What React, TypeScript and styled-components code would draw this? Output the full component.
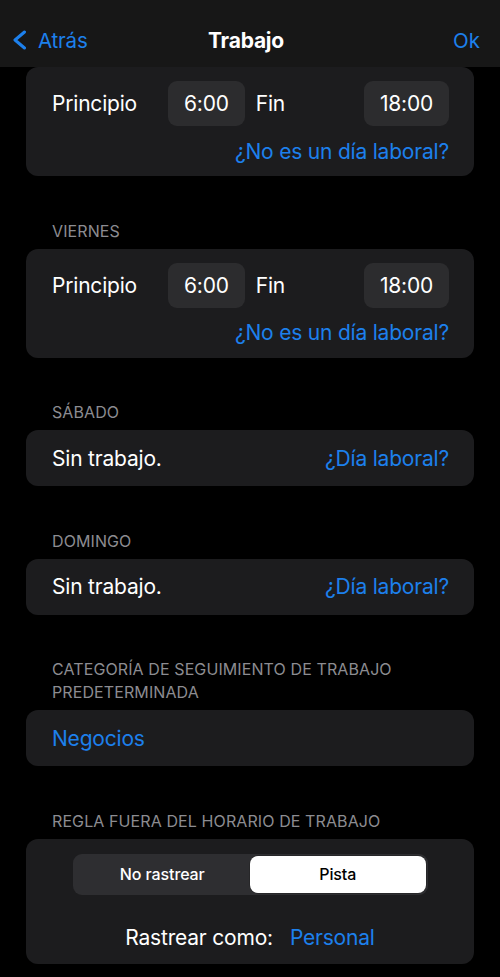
import React from "react";
import styled, { createGlobalStyle } from "styled-components";

const BLUE = "#1d80ec";

const Global = createGlobalStyle`
  html, body { margin: 0; padding: 0; background: #000; }
  body {
    font-family: Inter, "Noto Sans", "Liberation Sans", sans-serif;
    color: #fff;
    -webkit-font-smoothing: antialiased;
  }
`;

const Page = styled.div`
  width: 500px;
  min-height: 977px;
  background: #000;
  overflow: hidden;
`;

const NavBar = styled.header`
  height: 67px;
  box-sizing: border-box;
  padding: 13px 20px 0 12px;
  background: #171717;
  display: grid;
  grid-template-columns: 1fr auto 1fr;
  align-items: center;
`;

const BackButton = styled.div`
  display: flex;
  align-items: center;
  gap: 11px;
  color: ${BLUE};
  font-size: 20.5px;
  letter-spacing: -0.2px;
`;

const Title = styled.div`
  font-size: 21px;
  font-weight: 700;
  letter-spacing: -0.2px;
`;

const DoneButton = styled.div`
  justify-self: end;
  color: ${BLUE};
  font-size: 20.5px;
`;

const Section = styled.section<{ $first?: boolean }>`
  padding-top: ${(p) => (p.$first ? "0" : "43.5px")};
`;

const SectionHeader = styled.div`
  padding: 0 52px;
  margin-bottom: 6px;
  font-size: 16px;
  line-height: 23px;
  color: #8c8c91;
  text-transform: uppercase;
  letter-spacing: 0.1px;
`;

const Card = styled.div`
  margin: 0 26px;
  background: #1c1c1e;
  border-radius: 12px;
  box-sizing: border-box;
`;

const TimeCard = styled(Card)`
  padding: 14px 25px 0 26px;
`;

const TimeRow = styled.div`
  display: grid;
  grid-template-columns: 116px auto 1fr auto;
  align-items: center;
  height: 45px;
`;

const Label = styled.span<{ $gap?: number }>`
  font-size: 21px;
  letter-spacing: -0.2px;
  padding-left: ${(p) => p.$gap ?? 0}px;
`;

const TimePill = styled.span`
  height: 45px;
  box-sizing: border-box;
  padding: 0 16px;
  display: flex;
  align-items: center;
  justify-content: center;
  background: #2c2c2e;
  border-radius: 9px;
  font-size: 21px;
  letter-spacing: -0.2px;
`;

const LinkRow = styled.div`
  height: 50px;
  display: flex;
  align-items: center;
  justify-content: flex-end;
`;

const Link = styled.span`
  color: ${BLUE};
  font-size: 21px;
  letter-spacing: -0.2px;
`;

const SimpleRow = styled(Card)<{ $align?: "between" | "start" }>`
  height: 56px;
  padding: 0 25px 0 26px;
  display: flex;
  align-items: center;
  justify-content: ${(p) => (p.$align === "start" ? "flex-start" : "space-between")};
`;

const RuleCard = styled(Card)`
  padding: 15px 0 12px;
  display: flex;
  flex-direction: column;
  align-items: center;
`;

const Segmented = styled.div`
  width: 355px;
  height: 41px;
  box-sizing: border-box;
  padding: 2px;
  background: #2e2e31;
  border-radius: 9px;
  display: grid;
  grid-template-columns: 1fr 1fr;
`;

const Segment = styled.div<{ $active?: boolean }>`
  display: flex;
  align-items: center;
  justify-content: center;
  border-radius: 8px;
  font-size: 16px;
  font-weight: 500;
  letter-spacing: -0.1px;
  background: ${(p) => (p.$active ? "#fff" : "transparent")};
  color: ${(p) => (p.$active ? "#000" : "#fff")};
  box-shadow: ${(p) => (p.$active ? "0 0 0 0.5px rgba(0,0,0,0.3)" : "none")};
`;

const TrackAs = styled.div`
  margin-top: 29px;
  height: 28px;
  display: flex;
  align-items: center;
  gap: 17px;
  font-size: 21px;
  letter-spacing: -0.2px;
`;

const Chevron = () => (
  <svg width="15" height="20" viewBox="0 0 15 20" fill="none">
    <path
      d="M12.5 2 L3 10 L12.5 18"
      stroke={BLUE}
      strokeWidth="3"
      strokeLinecap="round"
      strokeLinejoin="round"
    />
  </svg>
);

const DayTimes = ({ start, end }: { start: string; end: string }) => (
  <TimeCard>
    <TimeRow>
      <Label>Principio</Label>
      <TimePill>{start}</TimePill>
      <Label $gap={11}>Fin</Label>
      <TimePill>{end}</TimePill>
    </TimeRow>
    <LinkRow>
      <Link>¿No es un día laboral?</Link>
    </LinkRow>
  </TimeCard>
);

export default function App() {
  return (
    <Page>
      <Global />
      <NavBar>
        <BackButton>
          <Chevron />
          <span>Atrás</span>
        </BackButton>
        <Title>Trabajo</Title>
        <DoneButton>Ok</DoneButton>
      </NavBar>

      <Section $first>
        <DayTimes start="6:00" end="18:00" />
      </Section>

      <Section>
        <SectionHeader>Viernes</SectionHeader>
        <DayTimes start="6:00" end="18:00" />
      </Section>

      <Section>
        <SectionHeader>Sábado</SectionHeader>
        <SimpleRow>
          <Label>Sin trabajo.</Label>
          <Link>¿Día laboral?</Link>
        </SimpleRow>
      </Section>

      <Section>
        <SectionHeader>Domingo</SectionHeader>
        <SimpleRow>
          <Label>Sin trabajo.</Label>
          <Link>¿Día laboral?</Link>
        </SimpleRow>
      </Section>

      <Section>
        <SectionHeader>
          Categoría de seguimiento de trabajo
          <br />
          predeterminada
        </SectionHeader>
        <SimpleRow $align="start">
          <Link>Negocios</Link>
        </SimpleRow>
      </Section>

      <Section>
        <SectionHeader>Regla fuera del horario de trabajo</SectionHeader>
        <RuleCard>
          <Segmented>
            <Segment>No rastrear</Segment>
            <Segment $active>Pista</Segment>
          </Segmented>
          <TrackAs>
            <span>Rastrear como:</span>
            <Link>Personal</Link>
          </TrackAs>
        </RuleCard>
      </Section>
    </Page>
  );
}
